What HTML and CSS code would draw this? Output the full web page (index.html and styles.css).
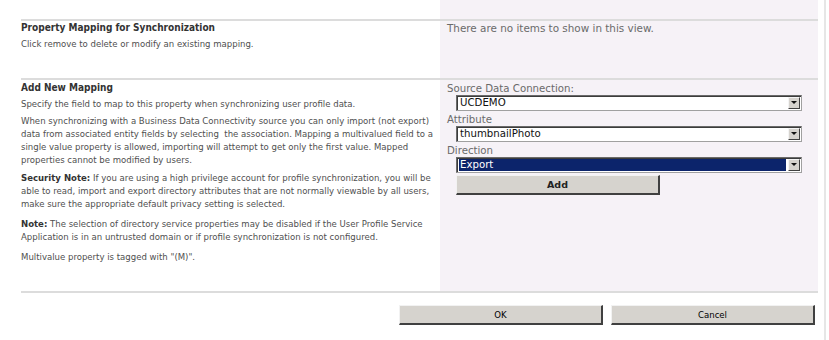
FILE: index.html
```html
<!DOCTYPE html>
<html lang="en">
<head>
    <meta charset="UTF-8">
    <title>Add New Mapping</title>
    <link rel="stylesheet" href="styles.css">
</head>
<body>

<div class="page">
    <div class="form">
        <div class="row spacer">
            <div class="left"></div>
            <div class="right"></div>
        </div>

        <div class="row sec-list">
            <div class="left">
                <h3>Property Mapping for Synchronization</h3>
                <p class="gap3">Click remove to delete or modify an existing mapping.</p>
            </div>
            <div class="right">
                <p class="empty">There are no items to show in this view.</p>
            </div>
        </div>

        <div class="row sec-add">
            <div class="left">
                <h3>Add New Mapping</h3>
                <p class="gap3">Specify the field to map to this property when synchronizing user profile data.</p>
                <p class="gap4">When synchronizing with a Business Data Connectivity source you can only import (not export)<br>
                data from associated entity fields by selecting &nbsp;the association. Mapping a multivalued field to a<br>
                single value property is allowed, importing will attempt to get only the first value. Mapped<br>
                properties cannot be modified by users.</p>
                <p class="gap5"><b>Security Note:</b> If you are using a high privilege account for profile synchronization, you will be<br>
                able to read, import and export directory attributes that are not normally viewable by all users,<br>
                make sure the appropriate default privacy setting is selected.</p>
                <p class="gap7"><b>Note:</b> The selection of directory service properties may be disabled if the User Profile Service<br>
                Application is in an untrusted domain or if profile synchronization is not configured.</p>
                <p class="gap7">Multivalue property is tagged with "(M)".</p>
            </div>
            <div class="right">
                <div class="label">Source Data Connection:</div>
                <div class="select">
                    <span class="value">UCDEMO</span>
                    <span class="arrow"></span>
                </div>
                <div class="label">Attribute</div>
                <div class="select">
                    <span class="value">thumbnailPhoto</span>
                    <span class="arrow"></span>
                </div>
                <div class="label">Direction</div>
                <div class="select focused">
                    <span class="value">Export</span>
                    <span class="arrow"></span>
                </div>
                <button class="btn add">Add</button>
            </div>
        </div>
    </div>

    <div class="actions">
        <button class="btn">OK</button>
        <button class="btn">Cancel</button>
    </div>
</div>

</body>
</html>
```

FILE: styles.css
```css
body { margin: 0; padding: 0; background: #fff; font-family: "DejaVu Sans Condensed", "DejaVu Sans", sans-serif; }
.page { width: 824px; height: 340px; border-right: 2px solid #e6e6e6; }
.form { margin-left: 21px; width: 797px; }
.row { display: grid; grid-template-columns: 419px 378px; }
.row + .row { border-top: 2px solid #dcdcdc; }
.right { background: #f6f2f7; }
.spacer { height: 19px; }
.sec-list { height: 57px; }
.sec-add { height: 211px; }

.left { font-size: 9.5px; line-height: 13px; color: #4f4f4f; white-space: nowrap; }
.left h3 { margin: 0; font-size: 10px; font-weight: bold; color: #333; }
.sec-add .left h3 { padding-top: 1px; }
.left p { margin: 0; }
.left b { color: #333; }
.gap3 { margin-top: 3px !important; }
.gap4 { margin-top: 4px !important; }
.gap5 { margin-top: 5px !important; }
.gap7 { margin-top: 7px !important; }

.empty { margin: 0; padding: 1px 0 0 7px; font-family: "DejaVu Sans", sans-serif; font-size: 10.4px; line-height: 13px; color: #6a6a6a; }

.sec-add .right { padding-top: 2px; box-sizing: border-box; }
.label { padding-left: 7px; font-family: "DejaVu Sans", sans-serif; font-size: 10.2px; line-height: 13px; color: #6a6a6a; }
.select { display: flex; align-items: center; box-sizing: border-box; width: 346px; height: 16px; margin: 0 0 2px 16px; background: #fff; border: 1px solid #7b7b7b; border-color: #6a6a6a #a0a0a0 #a0a0a0 #6a6a6a; box-shadow: inset 1px 1px 0 #3c3c3c; padding: 1px 1px 1px 2px; }
.select .value { flex: 1; font-family: "DejaVu Sans", sans-serif; font-size: 10.2px; line-height: 12px; color: #111; padding-left: 1px; height: 12px; }
.select.focused .value { background: #0c246b; color: #fff; }
.select .arrow { position: relative; box-sizing: border-box; width: 12px; height: 12px; margin-left: 2px; background: #d6d3ce; border-right: 1px solid #404040; border-bottom: 1px solid #404040; border-top: 1px solid #f4f4f4; border-left: 1px solid #f4f4f4; }
.select .arrow::after { content: ""; position: absolute; left: 2px; top: 3px; border-left: 3px solid transparent; border-right: 3px solid transparent; border-top: 3px solid #111; }

.btn { box-sizing: border-box; background: #d6d3ce; border-style: solid; border-width: 1px 2px 2px 1px; border-color: #f2f2f2 #404040 #404040 #f2f2f2; font-family: "DejaVu Sans Condensed", "DejaVu Sans", sans-serif; font-size: 9.5px; color: #000; padding: 0; }
.add { display: block; width: 204px; height: 20px; margin: 1px 0 0 16px; font-family: "DejaVu Sans", sans-serif; font-size: 9.5px; font-weight: bold; color: #222; }
.actions { margin-left: 21px; width: 797px; border-top: 2px solid #dcdcdc; display: flex; justify-content: flex-end; gap: 8px; padding: 12px 3px 0 0; box-sizing: border-box; }
.actions .btn { width: 204px; height: 20px; }
```
